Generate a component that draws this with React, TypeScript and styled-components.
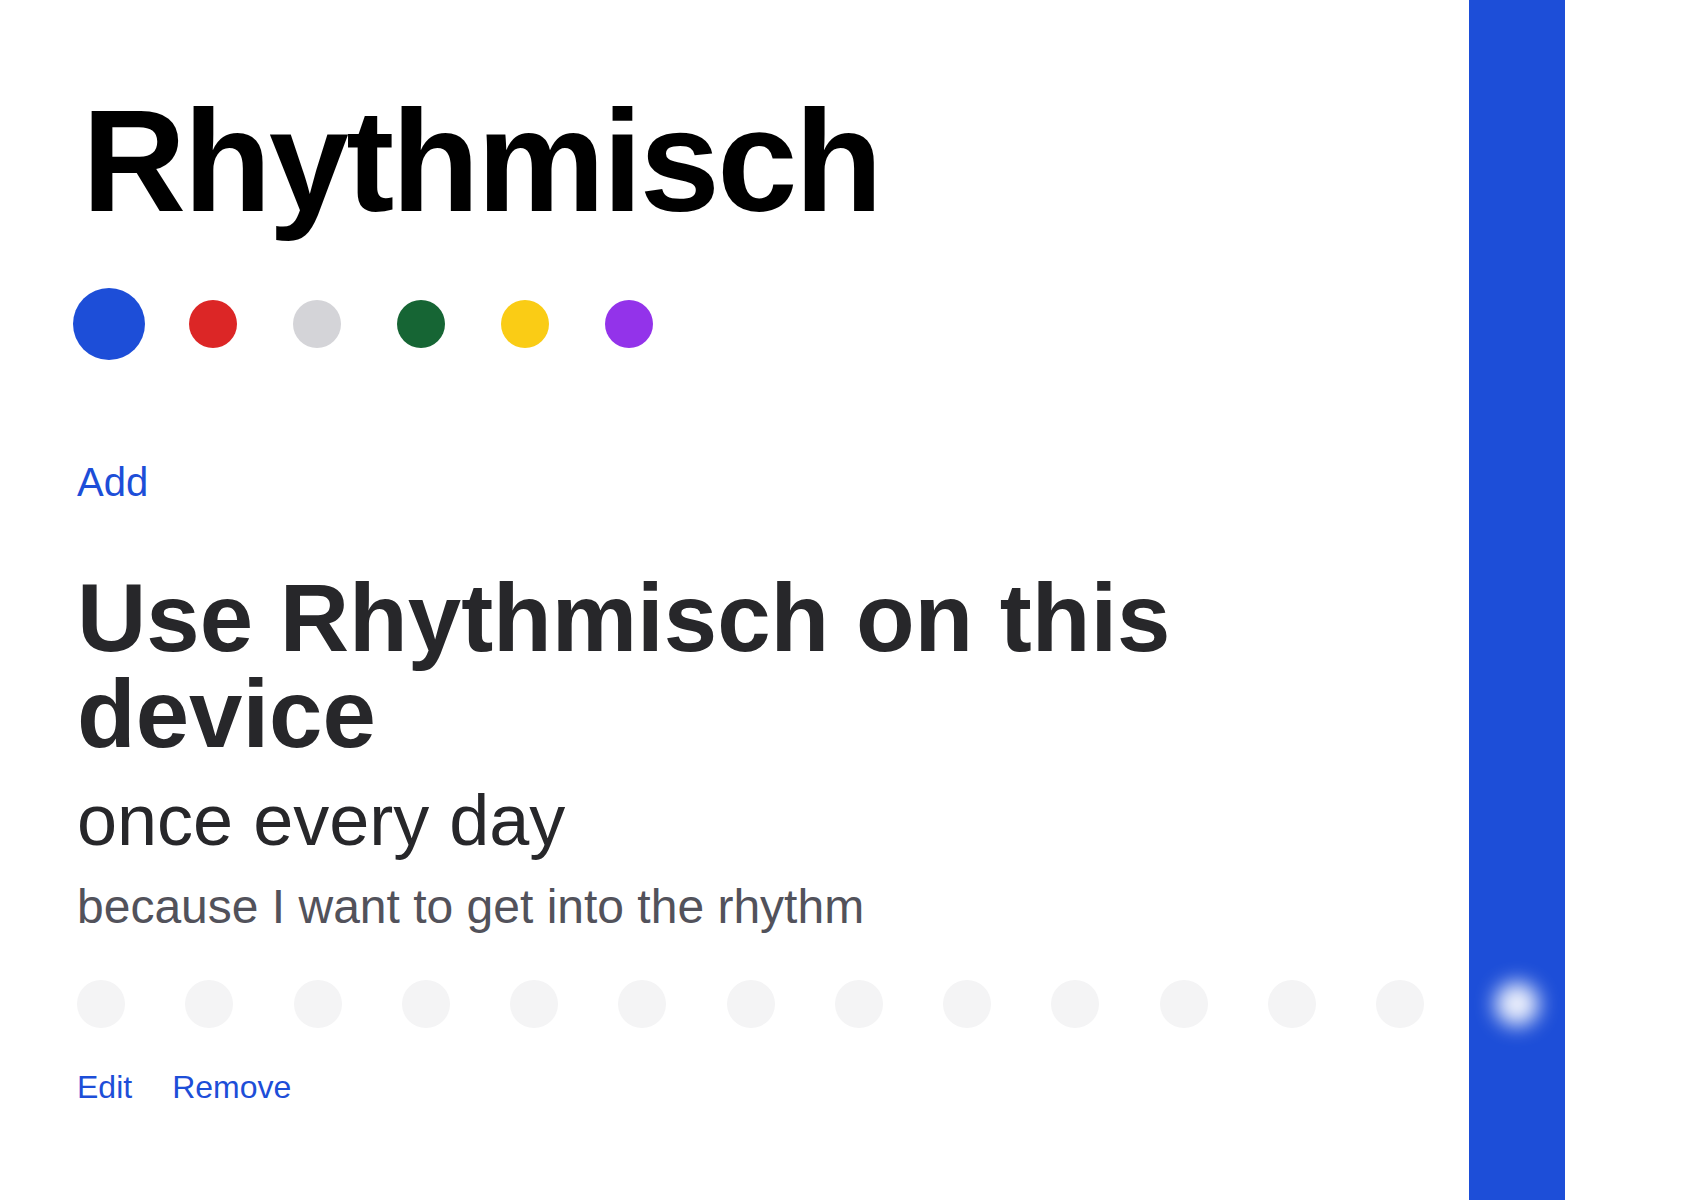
import React from "react";
import styled, { createGlobalStyle } from "styled-components";

const GlobalStyle = createGlobalStyle`
  html, body {
    margin: 0;
    padding: 0;
    background: #ffffff;
  }
  body {
    font-family: "Liberation Sans", Arial, Helvetica, sans-serif;
    -webkit-font-smoothing: antialiased;
  }
`;

const Page = styled.div`
  display: flex;
  min-height: 1200px;
  background: #ffffff;
`;

const Main = styled.main`
  flex: 1;
  display: flex;
  flex-direction: column;
  padding: 90px 45px 0 77px;
  min-width: 0;
`;

const Title = styled.h1`
  margin: 0 0 0 5px;
  font-size: 144px;
  line-height: 1;
  font-weight: 700;
  letter-spacing: -2.6px;
  color: #000000;
`;

const Swatches = styled.div`
  display: flex;
  align-items: center;
  gap: 32px;
  margin: 54px 0 0 -4px;
  height: 72px;
`;

const SwatchButton = styled.button`
  width: 72px;
  height: 72px;
  padding: 0;
  border: none;
  background: transparent;
  display: flex;
  align-items: center;
  justify-content: center;
  cursor: pointer;
`;

const SwatchDot = styled.span<{ $color: string; $selected?: boolean }>`
  display: block;
  width: ${(p) => (p.$selected ? "72px" : "48px")};
  height: ${(p) => (p.$selected ? "72px" : "48px")};
  border-radius: 50%;
  background: ${(p) => p.$color};
`;

const LinkButton = styled.button<{ $size: number }>`
  padding: 0;
  border: none;
  background: transparent;
  font-family: inherit;
  font-size: ${(p) => p.$size}px;
  line-height: 1;
  color: #1d4ed8;
  cursor: pointer;
  text-align: left;
`;

const AddRow = styled.div`
  margin-top: 102px;
  display: flex;
`;

const Heading = styled.h2`
  margin: 68px 0 0;
  font-size: 96px;
  line-height: 1;
  font-weight: 700;
  color: #27272a;
  max-width: 1140px;
`;

const Frequency = styled.p`
  margin: 22px 0 0;
  font-size: 72px;
  line-height: 1;
  color: #27272a;
`;

const Reason = styled.p`
  margin: 27px 0 0;
  font-size: 48px;
  line-height: 1;
  color: #52525b;
`;

const Days = styled.div`
  display: flex;
  justify-content: space-between;
  margin-top: 49px;
`;

const DayDot = styled.span`
  display: block;
  width: 48px;
  height: 48px;
  border-radius: 50%;
  background: #f4f4f5;
`;

const Actions = styled.div`
  display: flex;
  gap: 40px;
  margin-top: 43px;
`;

const Bar = styled.aside`
  position: relative;
  width: 96px;
  flex: 0 0 96px;
  margin-right: 121px;
  background: #1d4ed8;
`;

const Glow = styled.span`
  position: absolute;
  top: 982px;
  left: 50%;
  width: 44px;
  height: 44px;
  margin-left: -22px;
  border-radius: 50%;
  background: rgba(255, 255, 255, 0.92);
  filter: blur(10px);
`;

const colors = ["#1d4ed8", "#dc2626", "#d4d4d8", "#166534", "#facc15", "#9333ea"];

export default function App() {
  return (
    <>
      <GlobalStyle />
      <Page>
        <Main>
          <Title>Rhythmisch</Title>
          <Swatches>
            {colors.map((c, i) => (
              <SwatchButton key={c} aria-label={`color ${i + 1}`}>
                <SwatchDot $color={c} $selected={i === 0} />
              </SwatchButton>
            ))}
          </Swatches>
          <AddRow>
            <LinkButton $size={40}>Add</LinkButton>
          </AddRow>
          <Heading>Use Rhythmisch on this device</Heading>
          <Frequency>once every day</Frequency>
          <Reason>because I want to get into the rhythm</Reason>
          <Days>
            {Array.from({ length: 13 }).map((_, i) => (
              <DayDot key={i} />
            ))}
          </Days>
          <Actions>
            <LinkButton $size={32}>Edit</LinkButton>
            <LinkButton $size={32}>Remove</LinkButton>
          </Actions>
        </Main>
        <Bar>
          <Glow />
        </Bar>
      </Page>
    </>
  );
}
